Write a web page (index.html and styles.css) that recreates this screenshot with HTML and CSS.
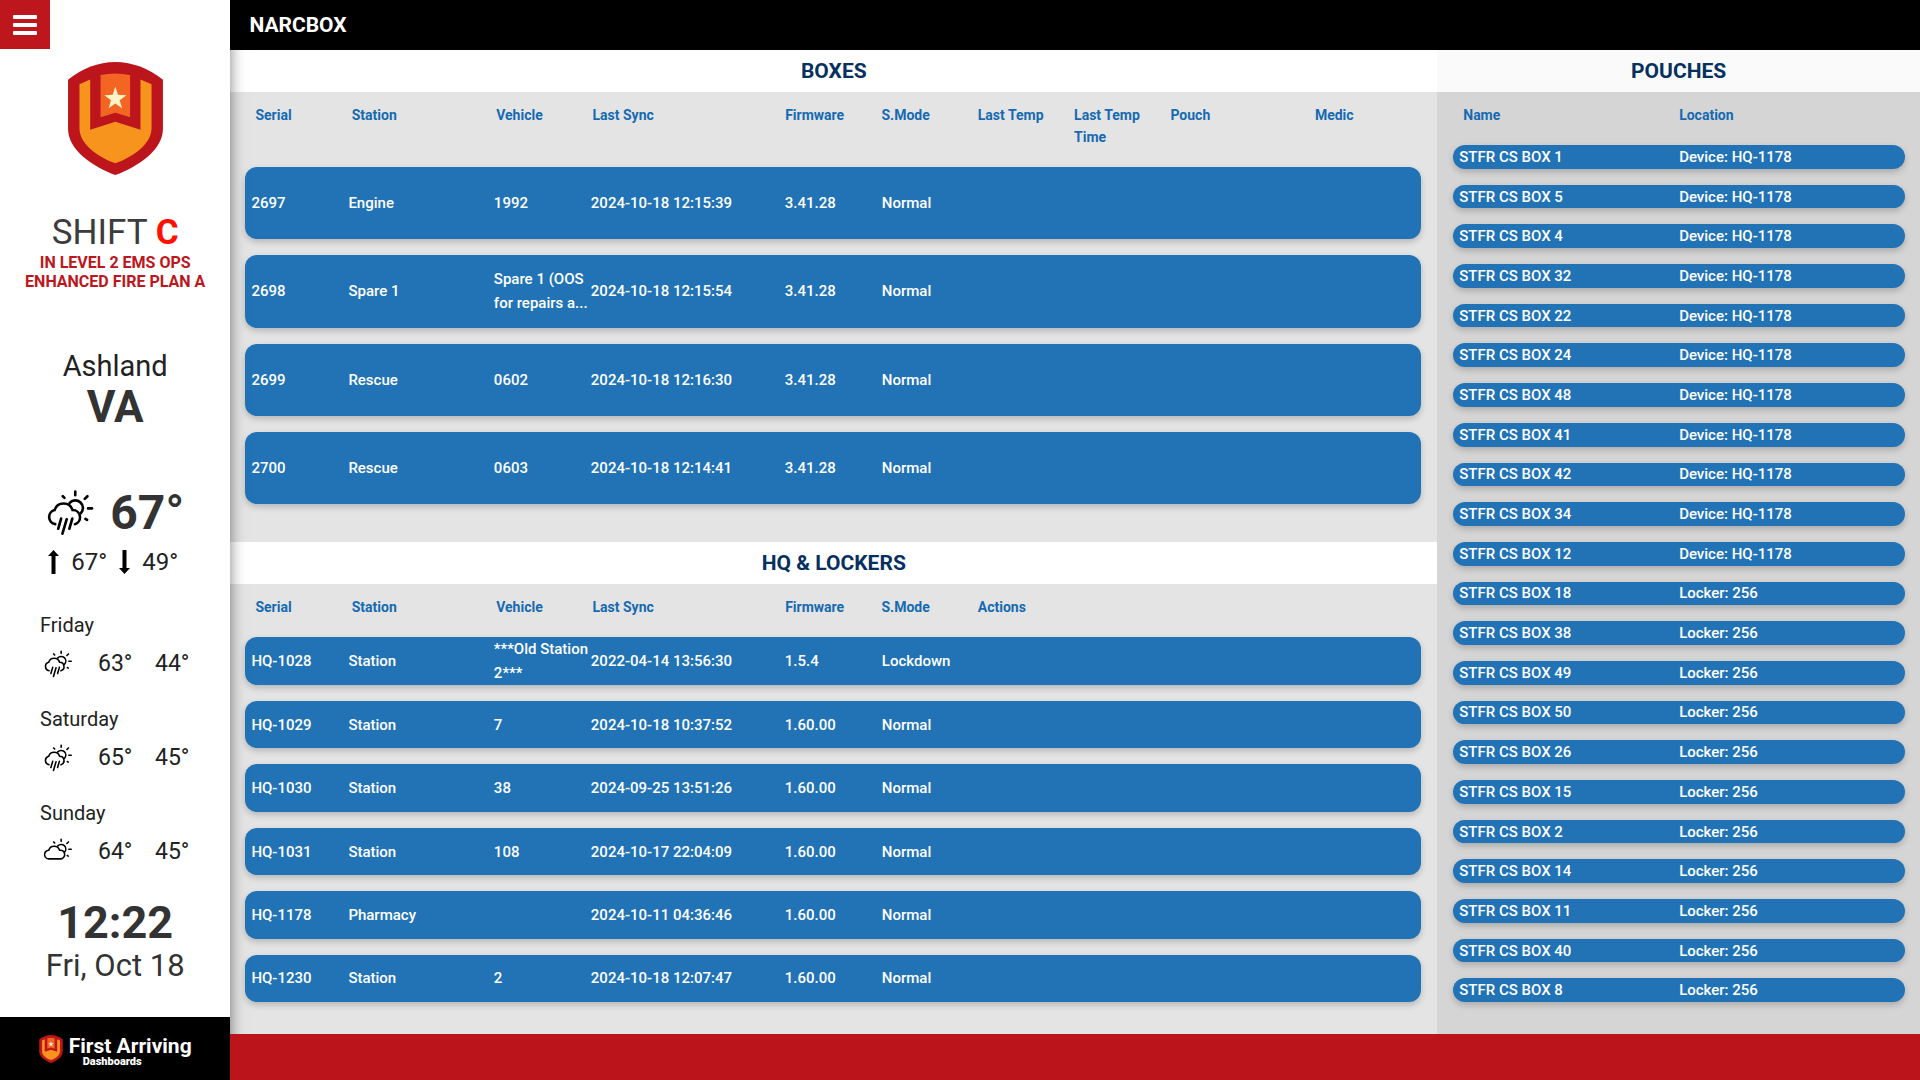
FILE: index.html
```html
<!DOCTYPE html>
<html lang="en">
<head>
    <meta charset="UTF-8">
    <meta name="viewport" content="width=device-width, initial-scale=1.0">
    <title>Narcbox Dashboard</title>
    <link rel="stylesheet" href="styles.css">
</head>
<body>
    <!-- Shared icons -->
    <svg class="sprite" aria-hidden="true">
        <symbol id="shield" viewBox="206 187 283 337">
            <path fill="#bc151b" d="M206 240Q270 188 347 187Q424 188 489 240V385C489 450 415 498 347 524C279 498 206 450 206 385Z"/>
            <path fill="#f7941e" d="M240 253L272 239V389L347 365L422 389V239L455 253V385C455 430 400 470 347 489C294 470 240 430 240 385Z"/>
            <path fill="#f26522" d="M303 226Q347 216 391 226V352L347 338L303 352Z"/>
            <path fill="#fff3c8" d="M347 261L355 285L380 286L360 301L367 325L347 311L327 325L334 301L314 286L339 285Z"/>
        </symbol>
        <symbol id="rain" viewBox="143 450 142 140">
            <g fill="none" stroke="#000" stroke-width="8" stroke-linecap="round">
                <path d="M169 554A22 22 0 0 1 167 511A29 29 0 0 1 222 511A22 22 0 0 1 229 554"/>
                <path d="M213 489A23 23 0 1 1 247 521"/>
                <path d="M230 455V466M192 469L197 474M259 477L267 469M269 506H281M261 538L266 541"/>
                <path d="M187 537L178 568M204 539L191 583M221 537L212 568"/>
            </g>
        </symbol>
        <symbol id="cloudy" viewBox="143 450 142 140">
            <g fill="none" stroke="#000" stroke-width="8" stroke-linecap="round">
                <path d="M169 555A22 22 0 0 1 167 511A29 29 0 0 1 222 511A22 22 0 0 1 229 555Z"/>
                <path d="M213 489A23 23 0 1 1 247 521"/>
                <path d="M230 455V466M192 469L197 474M259 477L267 469M269 506H281M261 538L266 541"/>
            </g>
        </symbol>
    </svg>

    <aside class="sidebar">
        <button class="menu-btn" aria-label="Menu"><span></span><span></span><span></span></button>
        <svg class="logo"><use href="#shield"/></svg>

        <div class="shift">SHIFT <b>C</b></div>
        <div class="alert">IN LEVEL 2 EMS OPS<br>ENHANCED FIRE PLAN A</div>

        <div class="city">Ashland</div>
        <div class="state">VA</div>

        <div class="current">
            <svg><use href="#rain"/></svg>
            <span>67°</span>
        </div>
        <div class="range">
            <svg viewBox="0 0 11 24"><path d="M5.500 0L11 6H7.500V24H3.500V6H0Z"/></svg>
            <span>67°</span>
            <svg viewBox="0 0 11 24"><path d="M5.500 24L11 18H7.500V0H3.500V18H0Z"/></svg>
            <span>49°</span>
        </div>

        <div class="day">
            <div class="day-name">Friday</div>
            <div class="day-info"><svg><use href="#rain"/></svg><span>63°</span><span>44°</span></div>
        </div>
        <div class="day">
            <div class="day-name">Saturday</div>
            <div class="day-info"><svg><use href="#rain"/></svg><span>65°</span><span>45°</span></div>
        </div>
        <div class="day">
            <div class="day-name">Sunday</div>
            <div class="day-info"><svg><use href="#cloudy"/></svg><span>64°</span><span>45°</span></div>
        </div>

        <div class="time">12:22</div>
        <div class="date">Fri, Oct 18</div>

        <div class="brand">
            <svg><use href="#shield"/></svg>
            <div class="brand-text">
                <div class="brand-name">First Arriving</div>
                <div class="brand-sub">Dashboards</div>
            </div>
        </div>
    </aside>

    <div class="page">
        <header class="header"><h1>NARCBOX</h1></header>

        <main class="content">
            <section class="panel boxes">
                <h2>BOXES</h2>
                <table class="devices">
                    <thead>
                        <tr><th>Serial</th><th>Station</th><th>Vehicle</th><th>Last Sync</th><th>Firmware</th><th>S.Mode</th><th>Last Temp</th><th>Last Temp Time</th><th>Pouch</th><th>Medic</th></tr>
                    </thead>
                    <tbody>
                        <tr><td>2697</td><td>Engine</td><td>1992</td><td>2024-10-18 12:15:39</td><td>3.41.28</td><td>Normal</td></tr>
                        <tr><td>2698</td><td>Spare 1</td><td>Spare 1 (OOS for repairs a...</td><td>2024-10-18 12:15:54</td><td>3.41.28</td><td>Normal</td></tr>
                        <tr><td>2699</td><td>Rescue</td><td>0602</td><td>2024-10-18 12:16:30</td><td>3.41.28</td><td>Normal</td></tr>
                        <tr><td>2700</td><td>Rescue</td><td>0603</td><td>2024-10-18 12:14:41</td><td>3.41.28</td><td>Normal</td></tr>
                    </tbody>
                </table>
            </section>

            <section class="panel lockers">
                <h2>HQ &amp; LOCKERS</h2>
                <table class="devices">
                    <thead>
                        <tr><th>Serial</th><th>Station</th><th>Vehicle</th><th>Last Sync</th><th>Firmware</th><th>S.Mode</th><th>Actions</th></tr>
                    </thead>
                    <tbody>
                        <tr><td>HQ-1028</td><td>Station</td><td>***Old Station 2***</td><td>2022-04-14 13:56:30</td><td>1.5.4</td><td>Lockdown</td></tr>
                        <tr><td>HQ-1029</td><td>Station</td><td>7</td><td>2024-10-18 10:37:52</td><td>1.60.00</td><td>Normal</td></tr>
                        <tr><td>HQ-1030</td><td>Station</td><td>38</td><td>2024-09-25 13:51:26</td><td>1.60.00</td><td>Normal</td></tr>
                        <tr><td>HQ-1031</td><td>Station</td><td>108</td><td>2024-10-17 22:04:09</td><td>1.60.00</td><td>Normal</td></tr>
                        <tr><td>HQ-1178</td><td>Pharmacy</td><td></td><td>2024-10-11 04:36:46</td><td>1.60.00</td><td>Normal</td></tr>
                        <tr><td>HQ-1230</td><td>Station</td><td>2</td><td>2024-10-18 12:07:47</td><td>1.60.00</td><td>Normal</td></tr>
                    </tbody>
                </table>
            </section>

            <section class="panel pouches">
                <h2>POUCHES</h2>
                <table>
                    <thead>
                        <tr><th>Name</th><th>Location</th></tr>
                    </thead>
                    <tbody>
                        <tr><td>STFR CS BOX 1</td><td>Device: HQ-1178</td></tr>
                        <tr><td>STFR CS BOX 5</td><td>Device: HQ-1178</td></tr>
                        <tr><td>STFR CS BOX 4</td><td>Device: HQ-1178</td></tr>
                        <tr><td>STFR CS BOX 32</td><td>Device: HQ-1178</td></tr>
                        <tr><td>STFR CS BOX 22</td><td>Device: HQ-1178</td></tr>
                        <tr><td>STFR CS BOX 24</td><td>Device: HQ-1178</td></tr>
                        <tr><td>STFR CS BOX 48</td><td>Device: HQ-1178</td></tr>
                        <tr><td>STFR CS BOX 41</td><td>Device: HQ-1178</td></tr>
                        <tr><td>STFR CS BOX 42</td><td>Device: HQ-1178</td></tr>
                        <tr><td>STFR CS BOX 34</td><td>Device: HQ-1178</td></tr>
                        <tr><td>STFR CS BOX 12</td><td>Device: HQ-1178</td></tr>
                        <tr><td>STFR CS BOX 18</td><td>Locker: 256</td></tr>
                        <tr><td>STFR CS BOX 38</td><td>Locker: 256</td></tr>
                        <tr><td>STFR CS BOX 49</td><td>Locker: 256</td></tr>
                        <tr><td>STFR CS BOX 50</td><td>Locker: 256</td></tr>
                        <tr><td>STFR CS BOX 26</td><td>Locker: 256</td></tr>
                        <tr><td>STFR CS BOX 15</td><td>Locker: 256</td></tr>
                        <tr><td>STFR CS BOX 2</td><td>Locker: 256</td></tr>
                        <tr><td>STFR CS BOX 14</td><td>Locker: 256</td></tr>
                        <tr><td>STFR CS BOX 11</td><td>Locker: 256</td></tr>
                        <tr><td>STFR CS BOX 40</td><td>Locker: 256</td></tr>
                        <tr><td>STFR CS BOX 8</td><td>Locker: 256</td></tr>
                    </tbody>
                </table>
            </section>
        </main>

        <footer class="footer"></footer>
    </div>
</body>
</html>
```

FILE: styles.css
```css
* {
    margin: 0;
    padding: 0;
    box-sizing: border-box;
}

body {
    display: flex;
    min-height: 100vh;
    font-family: Roboto, sans-serif;
    background: #e4e4e4;
    color: #222;
}

.sprite {
    position: absolute;
    width: 0;
    height: 0;
}

/* Sidebar */
.sidebar {
    position: relative;
    z-index: 1;
    flex: 0 0 12%;
    display: flex;
    flex-direction: column;
    align-items: center;
    background: #fff;
    box-shadow: 0 0 14px rgba(0, 0, 0, 0.5);
}

.menu-btn {
    align-self: flex-start;
    display: flex;
    flex-direction: column;
    align-items: center;
    justify-content: center;
    gap: 4px;
    width: 50px;
    height: 49px;
    background: #bd161c;
    border: 0;
    cursor: pointer;
}

.menu-btn span {
    width: 24px;
    height: 4px;
    border-radius: 1px;
    background: #fff;
}

.logo {
    width: 95px;
    height: 113px;
    margin-top: 13px;
}

.shift {
    margin-top: 37px;
    font-size: 35px;
    line-height: 41px;
    color: #3c3c3c;
}

.shift b {
    color: #f10;
}

.alert {
    font-size: 16px;
    font-weight: 700;
    line-height: 19px;
    text-align: center;
    color: #bd161c;
}

.city {
    margin-top: 57px;
    font-size: 29px;
    line-height: 36px;
}

.state {
    font-size: 44px;
    font-weight: 700;
    line-height: 46px;
    color: #333;
}

.current {
    display: flex;
    align-items: center;
    gap: 16px;
    margin-top: 55px;
    font-size: 48px;
    font-weight: 700;
    line-height: 56px;
    color: #333;
}

.current svg {
    width: 48px;
    height: 46px;
}

.range {
    display: flex;
    align-items: center;
    gap: 12px;
    margin-top: 6px;
    padding-right: 4px;
    font-size: 24px;
    line-height: 30px;
}

.range svg {
    width: 11px;
    height: 24px;
    fill: #000;
}

.day {
    align-self: stretch;
    padding-left: 40px;
    margin-bottom: 16px;
}

.range + .day {
    margin-top: 32px;
}

.day-name {
    font-size: 20px;
    line-height: 32px;
}

.day-info {
    display: flex;
    align-items: center;
    font-size: 23px;
    line-height: 46px;
}

.day-info svg {
    width: 28px;
    height: 28px;
    margin: 0 26px 0 4px;
}

.day-info span {
    width: 57px;
}

.time {
    margin-top: 7px;
    font-size: 45px;
    font-weight: 700;
    line-height: 50px;
    color: #333;
}

.date {
    font-size: 31px;
    line-height: 36px;
    color: #333;
}

.brand {
    align-self: stretch;
    display: flex;
    align-items: center;
    justify-content: center;
    gap: 6px;
    height: 63px;
    margin-top: auto;
    background: #000;
    color: #fff;
}

.brand svg {
    width: 24px;
    height: 28px;
}

.brand-text {
    padding-top: 5px;
}

.brand-name {
    font-size: 21px;
    font-weight: 700;
    line-height: 22px;
}

.brand-sub {
    padding-left: 14px;
    font-size: 11px;
    font-weight: 900;
    line-height: 10px;
}

/* Page */
.page {
    flex: 1;
    display: flex;
    flex-direction: column;
}

.header {
    position: relative;
    z-index: 2;
    padding: 0 19px;
    background: #000;
    color: #fff;
}

.header h1 {
    font-size: 21px;
    font-weight: 700;
    line-height: 50px;
}

.footer {
    position: relative;
    z-index: 2;
    height: 46px;
    background: #bb141a;
}

.content {
    flex: 1;
    display: grid;
    grid-template-columns: 5fr 2fr;
    grid-template-rows: 1fr 1fr;
}

/* Panels */
.panel {
    display: flex;
    flex-direction: column;
    padding-bottom: 32px;
}

.boxes {
    padding-bottom: 38px;
}

.pouches {
    grid-column: 2;
    grid-row: 1 / span 2;
    background: #d5d5d5;
}

.panel h2 {
    background: #fff;
    color: #06305f;
    font-size: 21px;
    font-weight: 700;
    line-height: 42px;
    text-align: center;
}

.pouches h2 {
    background: #fafafa;
}

/* Each row is a rounded card, spread over the panel height */
table {
    flex: 1;
    display: flex;
    flex-direction: column;
    padding: 0 15px 0 16px;
}

.devices {
    padding: 0 16px 0 15px;
}

tbody {
    flex: 1;
    display: flex;
    flex-direction: column;
    gap: 16px;
}

thead {
    display: block;
    padding: 12px 0 19px;
}

tr {
    display: grid;
    grid-template-columns: 1fr 1fr;
    align-items: center;
}

.devices tr {
    grid-template-columns: 2fr 3fr 2fr 4fr 2fr 2fr 2fr 2fr 3fr 2fr;
}

thead tr {
    align-items: start;
    padding: 0 10px;
}

tbody tr {
    flex: 1;
    padding: 0 6px;
    border-radius: 12px;
    background: #2173b6;
    box-shadow: 0 3px 6px rgba(0, 0, 0, 0.2);
}

th {
    font-size: 14px;
    font-weight: 700;
    line-height: 22px;
    text-align: left;
    color: #156ab2;
}

td {
    font-size: 15px;
    font-weight: 500;
    line-height: 24px;
    color: #fff;
}

.pouches td {
    line-height: 22px;
}
```
